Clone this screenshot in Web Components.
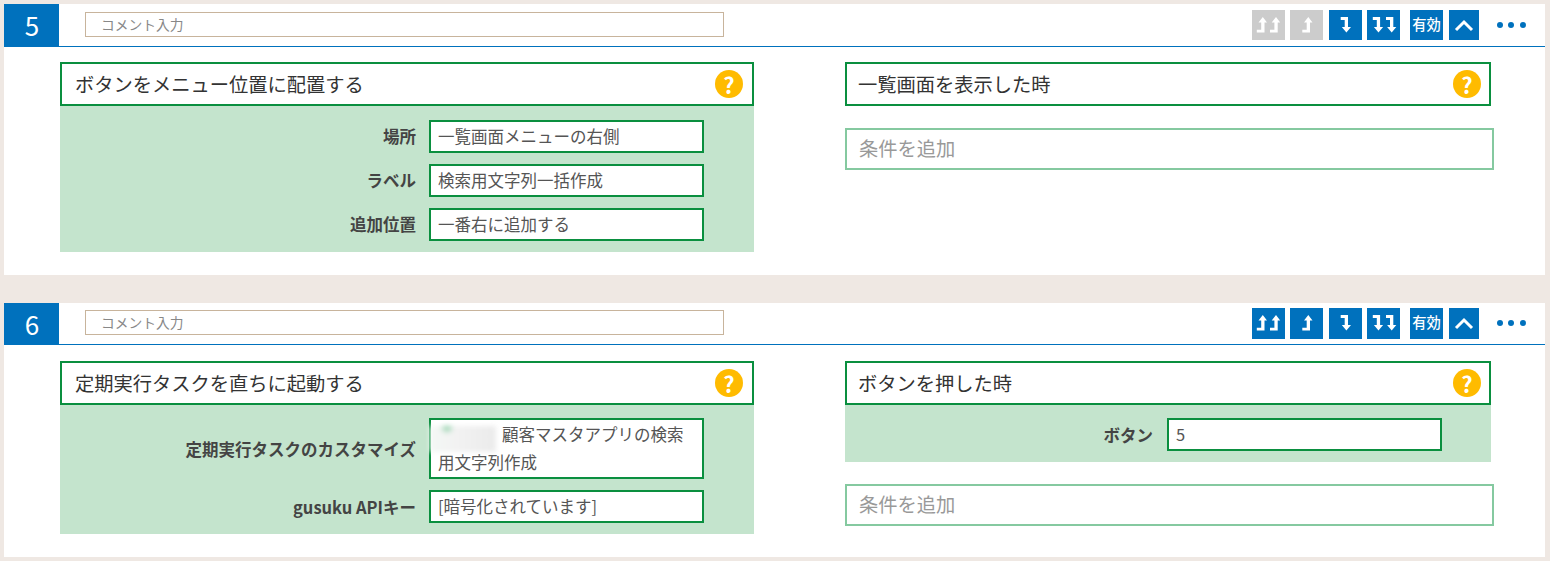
<!DOCTYPE html>
<html lang="ja">
<head>
<meta charset="utf-8">
<title>アクション</title>
<style>
  html, body { margin: 0; padding: 0; background: #efe8e3; }
  body {
    padding: 4px 5px 4px 4px;
    font-family: "Noto Sans CJK JP", "Noto Sans", sans-serif;
    color: #333;
  }
</style>
</head>
<body>

<rule-card number="5" top-disabled>
  <section-block slot="left" title-text="ボタンをメニュー位置に配置する">
    <field-row label="場所">一覧画面メニューの右側</field-row>
    <field-row label="ラベル">検索用文字列一括作成</field-row>
    <field-row label="追加位置">一番右に追加する</field-row>
  </section-block>
  <section-block slot="right" title-text="一覧画面を表示した時" narrow></section-block>
  <add-condition slot="right"></add-condition>
</rule-card>

<rule-card number="6">
  <section-block slot="left" title-text="定期実行タスクを直ちに起動する">
    <field-row label="定期実行タスクのカスタマイズ"><blur-mask></blur-mask>顧客マスタアプリの検索用文字列作成</field-row>
    <field-row label="gusuku APIキー">[暗号化されています]</field-row>
  </section-block>
  <section-block slot="right" title-text="ボタンを押した時" narrow>
    <field-row label="ボタン" wide>5</field-row>
  </section-block>
  <add-condition slot="right"></add-condition>
</rule-card>

<script>
// arrows are drawn around x=0 so they can be shifted inside the 33x30 button
const arrowShapes = {
  up: "0,7 4.200,12.500 1.700,12.500 1.700,22.500 -6,22.500 -6,19.700 -1.600,19.700 -1.600,12.500 -4.300,12.500",
  down: "-5.700,7 1.600,7 1.600,17 4.600,17 0,22.500 -4.600,17 -1.700,17 -1.700,10 -5.700,10",
};
const arrowOffsets = {
  up: { 1: [18.3], 2: [10.8, 24] },
  down: { 1: [17.4], 2: [11.5, 24.7] },
};

function arrowSvg(dir, count) {
  const shapes = arrowOffsets[dir][count]
    .map((x) => `<polygon transform="translate(${x} 0)" points="${arrowShapes[dir]}"/>`)
    .join("");
  return `<svg width="33" height="30" viewBox="0 0 33 30" fill="#fff">${shapes}</svg>`;
}

class ToolButton extends HTMLElement {
  constructor() {
    super();
    const shadow = this.attachShadow({ mode: "open" });
    shadow.innerHTML = `
      <style>
        :host {
          display: flex;
          align-items: center;
          justify-content: center;
          width: 33px;
          height: 30.400px;
          background: #0071bd;
          color: #fff;
          font-size: 14.300px;
          font-weight: 500;
          line-height: 26px;
          padding-bottom: 2px;
          box-sizing: border-box;
          white-space: nowrap;
        }
        :host([arrow]), :host([short]) { padding-bottom: 0; }
        :host([disabled]) { background: #cccccc; }
        :host([short]) { width: 30px; }
        svg { display: block; flex-shrink: 0; }
      </style>
      <slot></slot>
    `;
    const dir = this.getAttribute("arrow");
    if (dir) {
      shadow.innerHTML += arrowSvg(dir, Number(this.getAttribute("count") || 1));
    }
  }
}
customElements.define("tool-button", ToolButton);

class RuleCard extends HTMLElement {
  constructor() {
    super();
    const shadow = this.attachShadow({ mode: "open" });
    const off = this.hasAttribute("top-disabled") ? "disabled" : "";
    shadow.innerHTML = `
      <style>
        :host {
          display: block;
          background: #fff;
          margin-bottom: 28px;
        }
        .head {
          display: flex;
          align-items: flex-start;
          height: 41.600px;
          border-bottom: 1px solid #0071bd;
        }
        .num {
          width: 55px;
          height: 41.600px;
          padding-left: 1px;
          box-sizing: border-box;
          background: #0071bd;
          color: #fff;
          font-size: 26px;
          line-height: 42px;
          text-align: center;
        }
        .comment {
          box-sizing: border-box;
          width: 639px;
          height: 25px;
          margin: 7.600px 0 0 26px;
          padding-left: 15px;
          border: 1px solid #c8b49c;
          color: #888;
          font-size: 13.750px;
          line-height: 23px;
        }
        .tools {
          display: flex;
          margin: 5.700px 0 0 auto;
          padding-right: 19.200px;
        }
        .tools tool-button { margin-right: 5px; }
        .tools tool-button.after-up { margin-right: 6px; }
        .tools tool-button.toggle { margin-left: 5px; margin-right: 6px; }
        .tools tool-button[short] { margin-right: 0; }
        .dots {
          display: flex;
          gap: 5.400px;
          align-items: center;
          height: 30px;
          margin-left: 18px;
        }
        .dots i {
          width: 6px;
          height: 6px;
          border-radius: 50%;
          background: #0071bd;
        }
        .body {
          display: flex;
          padding: 15.450px 0 23px 56px;
        }
        .col { display: flex; flex-direction: column; }
        .left { width: 694px; margin-right: 91px; }
        .right { width: 649px; }
      </style>
      <div class="head">
        <div class="num">${this.getAttribute("number")}</div>
        <div class="comment">コメント入力</div>
        <div class="tools">
          <tool-button arrow="up" count="2" ${off}></tool-button>
          <tool-button arrow="up" class="after-up" ${off}></tool-button>
          <tool-button arrow="down"></tool-button>
          <tool-button arrow="down" count="2"></tool-button>
          <tool-button class="toggle">有効</tool-button>
          <tool-button short>
            <svg width="22" height="14" viewBox="0 0 22 14" fill="none" stroke="#fff" stroke-width="3"><path d="M3 12L11 4L19 12"/></svg>
          </tool-button>
          <div class="dots"><i></i><i></i><i></i></div>
        </div>
      </div>
      <div class="body">
        <div class="col left"><slot name="left"></slot></div>
        <div class="col right"><slot name="right"></slot></div>
      </div>
    `;
  }
}
customElements.define("rule-card", RuleCard);

class SectionBlock extends HTMLElement {
  constructor() {
    super();
    const shadow = this.attachShadow({ mode: "open" });
    shadow.innerHTML = `
      <style>
        :host { display: block; }
        :host([narrow]) { width: 646px; }
        .title {
          box-sizing: border-box;
          display: flex;
          align-items: center;
          height: 44px;
          padding: 0 9px 0 13px;
          border: 2px solid #0a8f3f;
          font-size: 19.250px;
          color: #333;
        }
        :host([narrow]) .title { padding: 0 8px 0 11px; }
        .help {
          width: 28px;
          height: 28px;
          margin-left: auto;
          border-radius: 50%;
          background: #ffbb00;
          color: #fff;
          font-size: 22px;
          font-weight: 700;
          line-height: 28px;
          text-align: center;
        }
        .panel {
          display: flex;
          flex-direction: column;
          gap: 11px;
          padding: 13.500px 0 11px;
          background: #c4e4cd;
        }
        .panel.empty { display: none; }
      </style>
      <div class="title"><span>${this.getAttribute("title-text")}</span><span class="help">?</span></div>
      <div class="panel"><slot></slot></div>
    `;
    if (!this.children.length) {
      shadow.querySelector(".panel").classList.add("empty");
    }
  }
}
customElements.define("section-block", SectionBlock);

class FieldRow extends HTMLElement {
  constructor() {
    super();
    const shadow = this.attachShadow({ mode: "open" });
    shadow.innerHTML = `
      <style>
        :host {
          display: flex;
          align-items: center;
        }
        .label {
          width: 356px;
          flex-shrink: 0;
          margin-right: 13px;
          font-size: 16.500px;
          font-weight: 700;
          text-align: right;
          color: #444;
        }
        :host([wide]) .label { width: 308px; margin-right: 14px; }
        .value {
          box-sizing: border-box;
          width: 275px;
          padding: 0 8px 1px 7px;
          border: 2px solid #0a8f3f;
          background: #fff;
          font-size: 16.500px;
          line-height: 28px;
          color: #555;
        }
      </style>
      <div class="label">${this.getAttribute("label")}</div>
      <div class="value"><slot></slot></div>
    `;
  }
}
customElements.define("field-row", FieldRow);

class BlurMask extends HTMLElement {
  constructor() {
    super();
    const shadow = this.attachShadow({ mode: "open" });
    shadow.innerHTML = `
      <style>
        :host {
          display: inline-block;
          position: relative;
          width: 66px;
          height: 26px;
          margin: -5px 6px -5px -8px;
          vertical-align: -6px;
          background:
            radial-gradient(circle 7px at 17px 1px, #7cc99a 0, rgba(124, 201, 154, 0) 100%),
            linear-gradient(90deg, #f4f8f5 0, #f2f2f2 40%, #ebebeb 100%);
          filter: blur(2.500px);
        }
      </style>
    `;
  }
}
customElements.define("blur-mask", BlurMask);

class AddCondition extends HTMLElement {
  constructor() {
    super();
    const shadow = this.attachShadow({ mode: "open" });
    shadow.innerHTML = `
      <style>
        :host {
          display: block;
          box-sizing: border-box;
          height: 42px;
          margin-top: 22px;
          padding-left: 12px;
          border: 2px solid #85c9a0;
          color: #999;
          font-size: 19.250px;
          line-height: 37px;
        }
      </style>
      条件を追加
    `;
  }
}
customElements.define("add-condition", AddCondition);
</script>
</body>
</html>
